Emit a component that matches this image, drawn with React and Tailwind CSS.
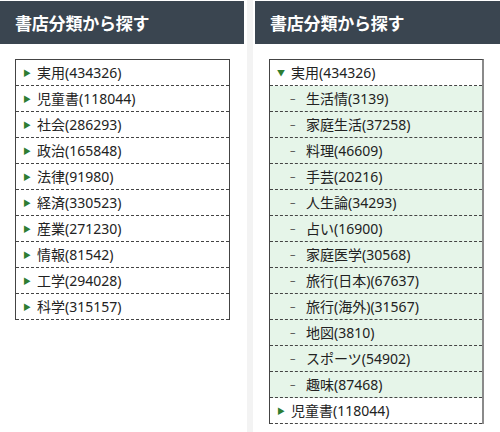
import React from "react";

const cats = [
  ["実用", 434326],
  ["児童書", 118044],
  ["社会", 286293],
  ["政治", 165848],
  ["法律", 91980],
  ["経済", 330523],
  ["産業", 271230],
  ["情報", 81542],
  ["工学", 294028],
  ["科学", 315157],
];

const subs = [
  ["生活情", 3139],
  ["家庭生活", 37258],
  ["料理", 46609],
  ["手芸", 20216],
  ["人生論", 34293],
  ["占い", 16900],
  ["家庭医学", 30568],
  ["旅行(日本)", 67637],
  ["旅行(海外)", 31567],
  ["地図", 3810],
  ["スポーツ", 54902],
  ["趣味", 87468],
];

function Header() {
  return (
    <div
      className="mt-px h-[43px] bg-[#3a4550] flex items-center pl-[15px] text-white text-[17px] font-bold tracking-[-0.2px]"
      style={{ fontFamily: '"Noto Sans CJK JP", sans-serif' }}
    >
      書店分類から探す
    </div>
  );
}

function Row({ open, label, sub }) {
  return (
    <div
      className={`h-[26px] flex items-center border-b border-dashed border-[#444] ${
        sub ? "bg-[#e6f5e9] pl-[20px]" : "pl-[7px]"
      }`}
    >
      {sub ? (
        <span className="w-[16px] text-[#555] text-[11px]">–</span>
      ) : (
        <span className="w-[14px] text-[#2e7d32] text-[8px] leading-none">{open ? "▼" : "▶"}</span>
      )}
      <span className="text-[14px] text-[#222]">{label}</span>
    </div>
  );
}

export default function App() {
  return (
    <div
      className="w-[500px] h-[432px] bg-white flex overflow-hidden"
      style={{ fontFamily: '"Noto Sans", "Noto Sans CJK JP", sans-serif' }}
    >
      <div className="w-[244px] shrink-0">
        <Header />
        <div className="mt-[15px] ml-[15px] w-[215px] border-t border-x border-[#444]">
          {cats.map(([n, c]) => (
            <Row key={n} label={`${n}(${c})`} />
          ))}
        </div>
      </div>
      <div className="w-[11px] shrink-0 flex justify-center">
        <div className="w-[6px] bg-[#f3f3f3]" />
      </div>
      <div className="flex-1">
        <Header />
        <div className="mt-[15px] ml-[14px] w-[215px] border-t border-l border-[#444] border-r-2 border-r-[#8a8a8a]">
          <Row open label="実用(434326)" />
          {subs.map(([n, c]) => (
            <Row key={n} sub label={`${n}(${c})`} />
          ))}
          <Row label="児童書(118044)" />
        </div>
      </div>
    </div>
  );
}
